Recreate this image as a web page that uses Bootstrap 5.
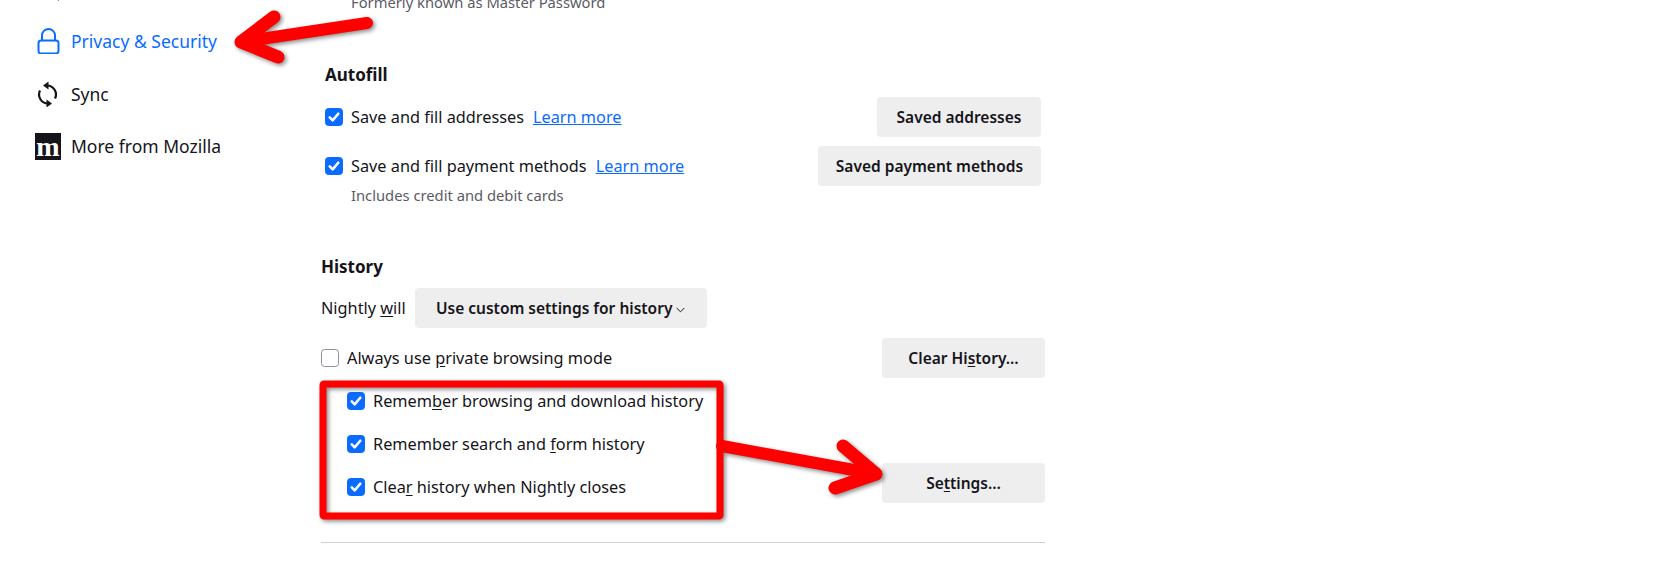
<!doctype html>
<html lang="en"><head><meta charset="utf-8">
<title>Settings</title>
<link href="https://cdn.jsdelivr.net/npm/bootstrap@5.3.0/dist/css/bootstrap.min.css" rel="stylesheet">
<style>
html,body{height:575px;overflow:hidden}
body{background:#fff;color:#15141a;font-family:"Noto Sans",sans-serif;font-size:16.3px;line-height:24px}
.pg{position:relative;height:575px;overflow:hidden}
.side{width:321px;flex:none;padding:29px 0 0 35px;font-size:17.5px}
.side-item{height:26px;margin-bottom:26px;gap:10px;white-space:nowrap}
.side-top{margin-top:-53px;margin-bottom:27px}
.side-item.on{color:#0a6cff;height:24px;margin-bottom:28px}
.ico{width:26px;height:26px;flex:none;display:block}
.moz{width:26px;height:27px;flex:none;background:#15141a;color:#fff;font-family:"Liberation Serif",serif;font-weight:700;font-size:28px;line-height:27px;text-align:center}
.main{width:724px;flex:none;margin-top:-8px}
.muted-line{color:#5b5b66;font-size:14.75px;line-height:20px}
.past{padding-left:30px}
.head{font-weight:700;font-size:17px;line-height:24px}
.fill{padding:0 4px}
.cb.form-check-input{width:18px;height:18px;margin:0;flex:none;border-radius:3.5px;border-color:#8f8f9d;float:none}
.cb.form-check-input:checked{background-color:#0a6cff;border-color:#0a6cff;background-size:100% 100%;background-image:url("data:image/svg+xml,%3csvg xmlns='http://www.w3.org/2000/svg' viewBox='0 0 18 18'%3e%3cpath fill='none' stroke='%23fff' stroke-width='2.9' stroke-linecap='round' stroke-linejoin='round' d='M4.200 9.500 7.500 12.800 13.800 5.300'/%3e%3c/svg%3e")}
.lbl{margin-left:8px;white-space:nowrap}
.lm{color:#0a6cff;margin-left:9px;text-decoration:underline}
.fb.btn{background:#eee;border:0;border-radius:4px;color:#15141a;font-weight:600;font-size:15.500px;line-height:22px;height:40px;padding:0;white-space:nowrap;--bs-btn-hover-bg:#e5e5e5}
.fb1{width:164px}.fb2{width:223px}.fb3{width:163px}.fb4{width:292px}
.indent{padding-left:26px;margin-top:2px}
.rule{border-top:1px solid #cfcfd8;height:0;margin-top:34px}
.overlay{position:absolute;left:0;top:0;pointer-events:none;filter:drop-shadow(2px 2px 2px rgba(0,0,0,.45))}
u{text-underline-offset:2px}
.chev{margin-left:4px;vertical-align:1px}
.h-a{margin-top:51px}.h-h{margin-top:50px}
.r1{margin-top:10px}.r2{margin-top:9px}.r3{margin-top:10px}
.note{margin-left:26px;margin-top:-1px}
.nw{margin-left:9px}
.t42{height:42px}.t43{height:43px}
.setb{margin-bottom:5px}
</style></head><body>
<div class="pg d-flex">
<nav class="side">
<div class="side-item side-top d-flex align-items-center">
<svg class="ico" viewBox="0 0 26 26" fill="none" stroke="#15141a" stroke-width="2"><circle cx="11" cy="11" r="8"/><path d="M17 17 24 24"/></svg></div>
<div class="side-item on d-flex align-items-center">
<svg class="ico" viewBox="0 0 26 26" fill="none" stroke="#0a6cff" stroke-width="2"><path d="M7 12V7.500a6.500 6.500 0 0 1 13 0V12"/><rect x="3.500" y="12.500" width="20" height="13" rx="2.500"/></svg>
<span>Privacy &amp; Security</span></div>
<div class="side-item d-flex align-items-center">
<svg class="ico" viewBox="0 0 26 26" fill="none" stroke="#15141a" stroke-width="2.200"><path d="M12 4.500a9 9 0 0 1 8 13"/><path d="M13 22.500a9 9 0 0 1-8-13"/><path d="M8 4.500 13.500 0.500V8.500zM17 22.500 11.500 18.500V26.500z" fill="#15141a" stroke="none"/></svg>
<span>Sync</span></div>
<div class="side-item d-flex align-items-center">
<div class="moz">m</div>
<span>More from Mozilla</span></div>
</nav>
<main class="main">
<div class="muted-line past">Formerly known as Master Password</div>
<div class="fill">
<div class="head h-a">Autofill</div>
<div class="d-flex align-items-center justify-content-between r1">
<div class="d-flex align-items-center"><input class="form-check-input cb" type="checkbox" checked><span class="lbl">Save and fill addresses</span><a class="lm" href="#">Learn more</a></div>
<button class="btn fb fb1" type="button">Saved addresses</button></div>
<div class="d-flex align-items-center justify-content-between r2">
<div class="d-flex align-items-center"><input class="form-check-input cb" type="checkbox" checked><span class="lbl">Save and fill payment methods</span><a class="lm" href="#">Learn more</a></div>
<button class="btn fb fb2" type="button">Saved payment methods</button></div>
<div class="muted-line note">Includes credit and debit cards</div>
</div>
<div class="head h-h">History</div>
<div class="d-flex align-items-center r2"><span>Nightly <u>w</u>ill</span>
<button class="btn fb fb4 nw" type="button">Use custom settings for history<svg class="chev" width="9" height="6" viewBox="0 0 9 6" fill="none" stroke="#15141a" stroke-width="1"><path d="M.7 1 4.500 4.800 8.300 1"/></svg></button></div>
<div class="d-flex align-items-center justify-content-between r3">
<div class="d-flex align-items-center"><input class="form-check-input cb" type="checkbox"><span class="lbl">Always use <u>p</u>rivate browsing mode</span></div>
<button class="btn fb fb3" type="button">Clear Hi<u>s</u>tory…</button></div>
<div class="d-flex justify-content-between indent">
<div class="d-flex flex-column">
<div class="d-flex align-items-center t42"><input class="form-check-input cb" type="checkbox" checked><span class="lbl">Remem<u>b</u>er browsing and download history</span></div>
<div class="d-flex align-items-center t43"><input class="form-check-input cb" type="checkbox" checked><span class="lbl">Remember search and <u>f</u>orm history</span></div>
<div class="d-flex align-items-center t43"><input class="form-check-input cb" type="checkbox" checked><span class="lbl">Clea<u>r</u> history when Nightly closes</span></div>
</div>
<button class="btn fb fb3 align-self-end setb" type="button">Se<u>t</u>tings…</button>
</div>
<div class="rule"></div>
</main>
<svg class="overlay" width="1656" height="575" viewBox="0 0 1656 575" fill="none" stroke="#f00" stroke-linecap="round" stroke-linejoin="round">
<path stroke-width="12" d="M367 23 241 42"/><path stroke-width="13" d="M274 17 241 42 278 57"/>
<rect x="323" y="384" width="397" height="132" rx="1" stroke-width="7"/>
<path stroke-width="12" d="M722 446 876 474"/><path stroke-width="13" d="M843 446 876 474 835 488"/>
</svg>
</div>
<script src="https://cdn.jsdelivr.net/npm/bootstrap@5.3.0/dist/js/bootstrap.bundle.min.js"></script>
</body></html>
